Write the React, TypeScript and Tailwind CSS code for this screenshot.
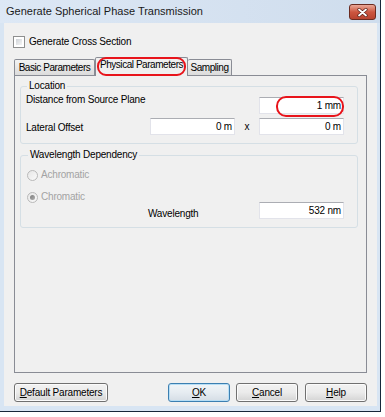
import React from "react";

function Input({ value, children }: { value: string; children?: React.ReactNode }) {
  return (
    <div className="relative w-[85px] h-[17px] bg-white border border-[#e2e3ea] border-t-[#abadb3] flex items-center justify-end pr-[2px] shrink-0">
      <span className="leading-[12px]">{value}</span>
      {children}
    </div>
  );
}

function Button({ children, primary, className }: { children: React.ReactNode; primary?: boolean; className?: string }) {
  return (
    <div
      className={
        "h-[19px] rounded-[3px] border flex items-center justify-center leading-[12px] " +
        (primary
          ? "border-[#3c7fb1] bg-gradient-to-b from-[#f1f5f8] via-[#e6ecf1] to-[#d5dde5] shadow-[inset_0_0_0_1px_#b7def5] "
          : "border-[#707070] bg-gradient-to-b from-[#f2f2f2] via-[#ebebeb] to-[#d4d4d4] shadow-[inset_0_0_0_1px_#fbfbfb] ") +
        (className || "")
      }
    >
      {children}
    </div>
  );
}

function Radio({ checked }: { checked?: boolean }) {
  return (
    <div className="w-[11px] h-[11px] rounded-full border border-[#b9b9b9] bg-gradient-to-br from-[#e6e6e6] to-[#fafafa] flex items-center justify-center shrink-0">
      {checked && <div className="w-[5px] h-[5px] rounded-full bg-gradient-to-br from-[#7d7d7d] to-[#b0b0b0]" />}
    </div>
  );
}

export default function App() {
  return (
    <div className="w-[385px] h-[417px] bg-white overflow-hidden font-['Liberation_Sans',Arial,sans-serif] text-[10px] tracking-[-0.2px] text-black">
      <div className="w-[381px] h-[412px] bg-[#d8e5f3] border-r border-b border-[#16273a] flex flex-col">
        {/* title bar */}
        <div className="h-[23px] shrink-0 flex items-start bg-gradient-to-r from-[#dde8f5] to-[#cfdded]">
          <span className="ml-[6px] mt-[5px] text-[11px] leading-[13px] tracking-normal text-[#1a1a1a]">
            Generate Spherical Phase Transmission
          </span>
          <div className="ml-auto mr-[4px] mt-[4px] w-[27px] h-[16px] rounded-[3px] border border-[#6b2b20] bg-gradient-to-b from-[#e9a898] via-[#cc5640] to-[#b8432f] flex items-center justify-center">
            <svg width="11" height="9" viewBox="0 0 11 9">
              <path d="M2 1.5 L9 7.5 M9 1.5 L2 7.5" stroke="#5a1f16" strokeWidth="3.2" strokeLinecap="round" />
              <path d="M2 1.5 L9 7.5 M9 1.5 L2 7.5" stroke="#ffffff" strokeWidth="1.8" strokeLinecap="round" />
            </svg>
          </div>
        </div>

        {/* client area */}
        <div className="ml-[4px] w-[373px] h-[383px] bg-[#f0f0f0] flex flex-col">
          {/* checkbox */}
          <div className="mt-[13px] ml-[9px] flex items-center h-[12px]">
            <div className="w-[12px] h-[12px] border border-[#8e8f8f] bg-white p-[2px]">
              <div className="w-full h-full bg-gradient-to-br from-[#cfd3d8] to-[#f5f5f5]" />
            </div>
            <span className="ml-[4px] leading-[12px]">Generate Cross Section</span>
          </div>

          {/* tabs */}
          <div className="mt-[9px] ml-[10px] h-[18px] flex items-end relative z-10 tracking-[-0.45px]">
            <div className="w-[81px] h-[16px] border border-b-0 border-[#898c95] rounded-t-[2px] bg-gradient-to-b from-[#f3f3f3] to-[#dcdcdc] flex items-center justify-center leading-[12px]">
              Basic Parameters
            </div>
            <div className="relative w-[93px] h-[19px] -mb-[1px] border border-b-0 border-[#898c95] rounded-t-[2px] bg-[#f0f0f0] flex items-start justify-center pt-[1px] leading-[12px]">
              Physical Parameters
              <div className="absolute left-[1px] top-[-1px] w-[89px] h-[19px] rounded-[9px] border-2 border-[#e8141b]" />
            </div>
            <div className="w-[44px] h-[16px] border border-b-0 border-l-0 border-[#898c95] rounded-t-[2px] bg-gradient-to-b from-[#f3f3f3] to-[#dcdcdc] flex items-center justify-center leading-[12px]">
              Sampling
            </div>
          </div>

          {/* panel */}
          <div className="ml-[10px] w-[353px] h-[298px] border border-[#898c95] bg-[#f0f0f0] flex flex-col pl-[5px]">
            {/* Location */}
            <fieldset className="mt-[3px] w-[338px] h-[65px] border border-[#d5dfe5] rounded-[3px] pl-[5px] pr-[13px] flex flex-col">
              <legend className="ml-[1px] px-[2px] leading-[14px]">Location</legend>
              <div className="mt-[4px] flex items-start h-[17px]">
                <span className="flex-1 mt-[-3px] leading-[12px]">Distance from Source Plane</span>
                <Input value="1 mm">
                  <div className="absolute left-[16px] top-[-2px] w-[68px] h-[21px] rounded-[10px] border-2 border-[#e8141b]" />
                </Input>
              </div>
              <div className="mt-[4px] flex items-start h-[17px]">
                <span className="flex-1 mt-[4px] leading-[12px]">Lateral Offset</span>
                <Input value="0 m" />
                <span className="w-[24px] text-center mt-[3px] leading-[12px]">x</span>
                <Input value="0 m" />
              </div>
            </fieldset>

            {/* Wavelength Dependency */}
            <fieldset className="mt-[4px] w-[338px] h-[80px] border border-[#d5dfe5] rounded-[3px] pl-[6px] pr-[13px] flex flex-col">
              <legend className="ml-[1px] px-[2px] leading-[14px]">Wavelength Dependency</legend>
              <div className="mt-[7px] flex items-center h-[12px]">
                <Radio />
                <span className="ml-[3px] leading-[12px] text-[#a3a3a3]">Achromatic</span>
              </div>
              <div className="mt-[10px] flex items-center h-[12px]">
                <Radio checked />
                <span className="ml-[3px] leading-[12px] text-[#a3a3a3]">Chromatic</span>
              </div>
              <div className="mt-[-1px] flex items-start h-[17px]">
                <span className="ml-[121px] mt-[6px] leading-[12px]">Wavelength</span>
                <div className="ml-auto">
                  <Input value="532 nm" />
                </div>
              </div>
            </fieldset>
          </div>

          {/* buttons */}
          <div className="mt-[10px] flex items-start">
            <Button className="ml-[10px] w-[94px]">
              <span>
                <u className="underline-offset-1">D</u>efault Parameters
              </span>
            </Button>
            <Button primary className="ml-[60px] w-[62px]">
              <span>
                <u className="underline-offset-1">O</u>K
              </span>
            </Button>
            <Button className="ml-[6px] w-[62px]">
              <span>
                <u className="underline-offset-1">C</u>ancel
              </span>
            </Button>
            <Button className="ml-[7px] w-[62px]">
              <span>
                <u className="underline-offset-1">H</u>elp
              </span>
            </Button>
          </div>
        </div>
      </div>
    </div>
  );
}
